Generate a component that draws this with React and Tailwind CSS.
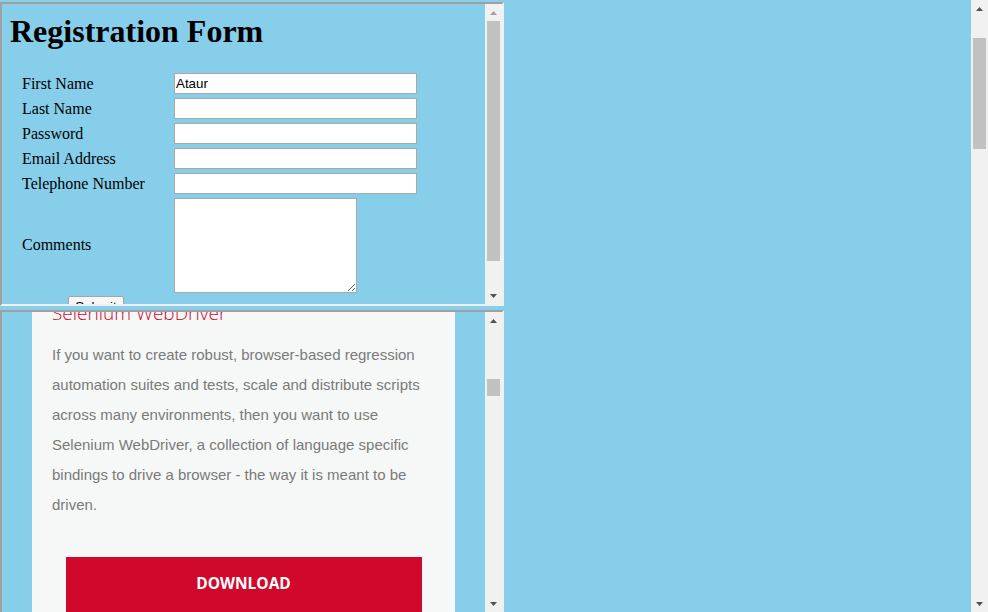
import React from 'react';

const FIELDS = [
  { label: 'First Name', value: 'Ataur' },
  { label: 'Last Name', value: '' },
  { label: 'Password', value: '', type: 'password' },
  { label: 'Email Address', value: '' },
  { label: 'Telephone Number', value: '' },
];

const Arrow = ({ up, dim }) => (
  <svg width="7" height="4" viewBox="0 0 7 4" className={dim ? 'fill-[#a3a3a3]' : 'fill-[#505050]'}>
    <path d={up ? 'M3.5 0L7 4H0z' : 'M0 0h7L3.5 4z'} />
  </svg>
);

// fake classic scrollbar, thumb placement given as full class names
const ScrollBar = ({ thumb, upDim }) => (
  <div className="w-[17px] flex-none h-full bg-[#f1f1f1] flex flex-col">
    <div className="h-[17px] flex-none flex items-center justify-center">
      <Arrow up dim={upDim} />
    </div>
    <div className="flex-1 px-[2px] overflow-hidden">
      <div className={`bg-[#c1c1c1] ${thumb}`} />
    </div>
    <div className="h-[17px] flex-none flex items-center justify-center">
      <Arrow />
    </div>
  </div>
);

const Frame = ({ children, thumb, upDim }) => (
  <div className="w-[504px] h-[304px] flex-none border-2 border-t-[#a0a0a0] border-l-[#a0a0a0] border-b-[#f0f0f0] border-r-[#f0f0f0] flex overflow-hidden">
    <div className="flex-1 h-full overflow-hidden">{children}</div>
    <ScrollBar thumb={thumb} upDim={upDim} />
  </div>
);

const RegistrationForm = () => (
  <div className="pl-[8px] flow-root font-['Liberation_Serif',serif] text-black">
    <h1 className="mt-[9px] text-[32px] font-bold leading-[36px]">Registration Form</h1>
    <form className="mt-[22px] pl-[12px]" onSubmit={(e) => e.preventDefault()}>
      {FIELDS.map((f) => (
        <div key={f.label} className="flex items-center h-[25px]">
          <label className="w-[152px] flex-none text-[16px] leading-[18px]">{f.label}</label>
          <input
            type={f.type || 'text'}
            defaultValue={f.value}
            className="w-[243px] h-[21px] border border-[#a9a9a9] bg-white px-[1px] text-[13.33px] font-['Liberation_Sans',sans-serif] outline-none"
          />
        </div>
      ))}
      <div className="flex items-center h-[98px]">
        <label className="w-[152px] flex-none text-[16px] leading-[18px]">Comments</label>
        <textarea className="w-[183px] h-[95px] border border-[#a9a9a9] bg-white resize outline-none" />
      </div>
      <div className="flex pl-[46px] pt-[2px]">
        <button
          type="submit"
          className="w-[56px] h-[21px] border border-[#a6a6a6] rounded-[2px] bg-[#f7f7f7] text-[13.33px] leading-[15px] text-black font-['Liberation_Sans',sans-serif]"
        >
          Submit
        </button>
      </div>
    </form>
  </div>
);

const SeleniumCard = () => (
  <div className="pl-[30px] h-full">
    <div className="w-[423px] h-full flow-root bg-[#f6f8f7] px-[20px]">
      <h2 className="-mt-[11px] text-[19px] font-light leading-[24px] text-[#d0092c] font-['Open_Sans',sans-serif]">
        Selenium WebDriver
      </h2>
      <p className="mt-[15px] text-[15px] leading-[30px] text-[#7a7a7a] font-['Liberation_Sans',sans-serif]">
        If you want to create robust, browser-based regression automation suites and tests, scale and
        distribute scripts across many environments, then you want to use Selenium WebDriver, a
        collection of language specific bindings to drive a browser - the way it is meant to be driven.
      </p>
      <div className="mt-[37px] mx-auto w-[356px] h-[60px] pb-[6px] bg-[#d0092c] flex items-center justify-center text-white text-[15.5px] font-bold font-['Open_Sans',sans-serif]">
        DOWNLOAD
      </div>
    </div>
  </div>
);

export default function App() {
  return (
    <div className="flex w-[988px] h-[612px] overflow-hidden bg-[#87ceeb]">
      <div className="flex-1 pt-[2px] flex flex-col gap-[4px] overflow-hidden">
        <Frame thumb="mt-0 h-[240px]" upDim>
          <RegistrationForm />
        </Frame>
        <Frame thumb="mt-[50px] h-[17px]">
          <SeleniumCard />
        </Frame>
      </div>
      <ScrollBar thumb="mt-[21px] h-[111px]" />
    </div>
  );
}
